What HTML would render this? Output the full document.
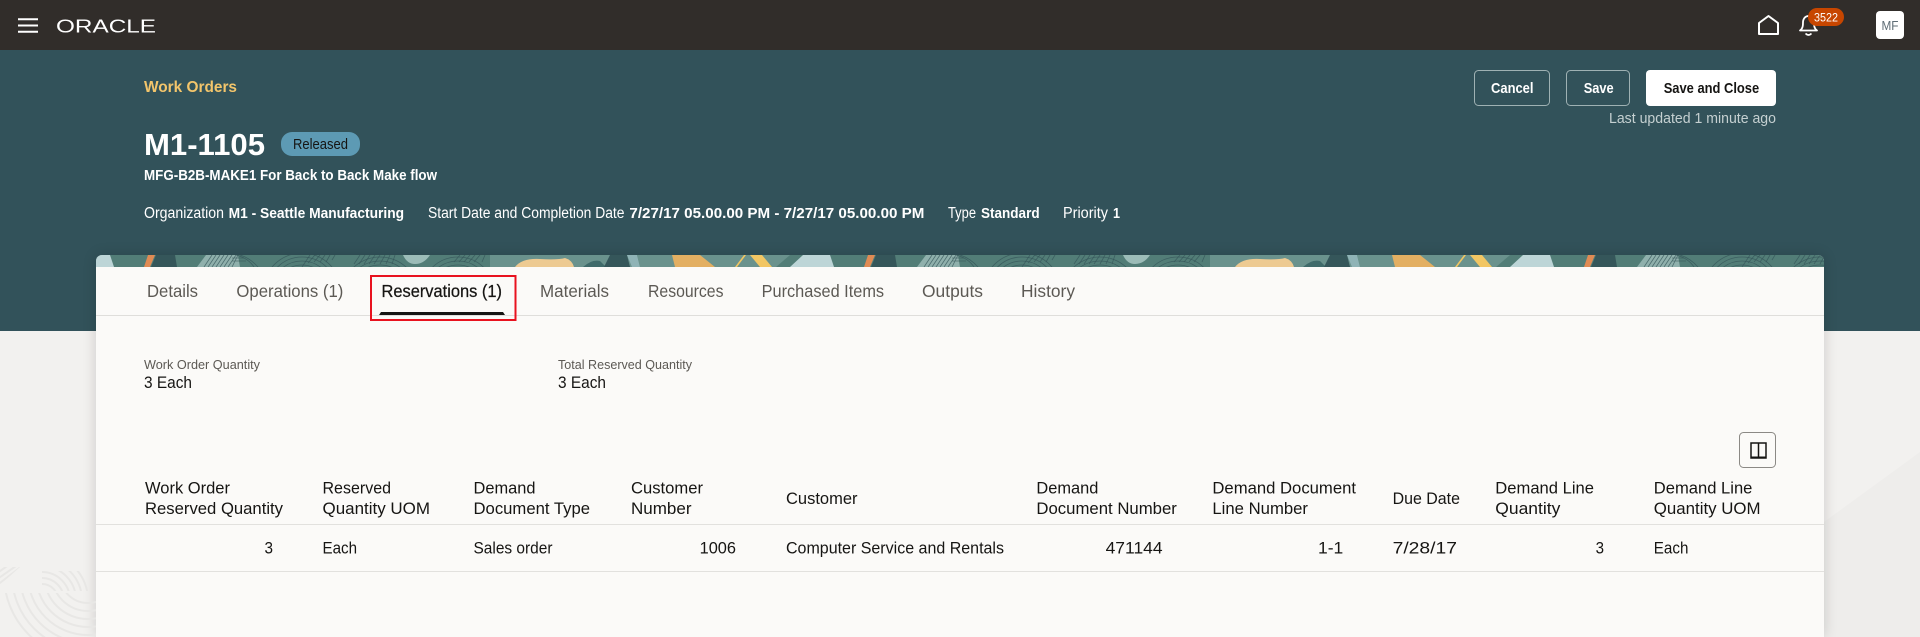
<!DOCTYPE html>
<html lang="en">
<head>
<meta charset="utf-8">
<title>Work Orders - Reservations</title>
<style>
html,body{margin:0;padding:0;width:1920px;height:637px;overflow:hidden;background:#f2f1ef}
body{position:relative}
#teal{position:absolute;left:0;top:0;width:1920px;height:331px;background:#32525a}
#art{position:absolute;left:1824px;top:452px;width:96px;height:185px;background:#eeedeb;clip-path:polygon(0 70px,96px 0,96px 185px,0 185px)}
#clip{position:absolute;left:0;top:0;width:1920px;height:637px;overflow:hidden}
#card{position:absolute;left:96px;top:255px;width:1728px;height:382px;background:#fbfaf8;border-radius:6px 6px 0 0;box-shadow:0 0 14px rgba(0,0,0,.16)}
svg{position:absolute;left:0;top:0;display:block}
text{font-family:"Liberation Sans",sans-serif;white-space:pre}
.t{font-size:16.5px;fill:#161513}
.h{font-size:16.5px;fill:#161513;font-weight:400}
.tab{font-size:17.5px;fill:#5c5954}
.w{fill:#fff;font-size:15.5px}
.b{fill:#fff;font-size:15px;font-weight:700}
</style>
</head>
<body>
<div id="clip">
<div id="teal"></div>
<div id="art"></div>
<div id="card"></div>
<svg width="1920" height="637" viewBox="0 0 1920 637" xmlns="http://www.w3.org/2000/svg">
<defs>
<clipPath id="strip"><path d="M96 267V261a6 6 0 0 1 6-6H1818a6 6 0 0 1 6 6V267Z"/></clipPath>
<clipPath id="bl1"><path d="M0 567H20L0 585Z"/></clipPath>
<clipPath id="bl2"><rect x="42" y="571" width="54" height="20"/></clipPath>
<clipPath id="bl3"><rect x="0" y="593" width="96" height="44"/></clipPath>
<g id="tile">
<rect x="96" y="255" width="720" height="12" fill="#527d77"/>
<rect x="490" y="255" width="150" height="12" fill="#6a928d"/>
<path d="M96 255H110L114 267H96Z" fill="#bdd5d7"/>
<path d="M148 255H155L150 267H144Z" fill="#e08b54"/>
<path d="M156 255H175L177 267H151Z" fill="#35565a"/>
<path d="M197 267L206 255H238L240 267Z" fill="#8fb0ac"/>
<g fill="none" stroke="#35565a" stroke-width=".8" stroke-opacity=".75">
<path d="M204 267L212 255M208 267L216 255M212 267L220 255M216 267L224 255M220 267L228 255M224 267L232 255M228 267L236 255M232 267L238 255M232 258H244M232 261H246"/>
<path d="M236 255Q248 258 254 267M240 255Q250 258 258 267"/>
<circle cx="302" cy="292" r="27"/><circle cx="302" cy="292" r="31"/><circle cx="302" cy="292" r="35"/><circle cx="302" cy="292" r="39"/>
<circle cx="380" cy="296" r="31"/><circle cx="380" cy="296" r="35"/><circle cx="380" cy="296" r="39"/>
<path d="M310 255L302 267M315 255L308 263M320 255L314 262M325 255L320 262M330 255L326 262M335 255L332 260"/>
<path d="M360 255L354 264M365 255L359 264M370 255L364 264M375 255L369 264M380 255L374 264M385 255L380 264M390 255L386 264M395 255L392 264"/>
<circle cx="458" cy="294" r="29"/><circle cx="458" cy="294" r="33"/><circle cx="458" cy="294" r="37"/>
<path d="M460 255L454 262M465 255L459 262M470 255L464 262M475 255L469 262M480 255L474 262M485 255L482 262"/>
</g>
<path d="M403 255H430Q424 264 415 264Q407 264 403 255Z" fill="#9cbcb8"/>
<path d="M515 267Q522 258 540 259Q558 260 565 258Q572 260 574 267Z" fill="#edca92"/>
<path d="M583 267Q592 259 600 261L606 267Z" fill="#3f6a6a"/>
<path d="M610 255H627L630 267H604Z" fill="#35565a"/>
<path d="M627 255H637L640 267H632Z" fill="#8fb3b6"/>
<path d="M637 255H790L776 267H640Z" fill="#6a928d"/>
<path d="M672 255H700L715 267H675Z" fill="#e3af62"/>
<path d="M735 267L744 255H746L737 267Z" fill="#f2c663"/>
<path d="M750 255H762L772 267H760Z" fill="#f2c663"/>
<path d="M790 267L803 255H832L836 267Z" fill="#bdd5d7"/>
</g>
</defs>

<!-- top bar -->
<rect x="0" y="0" width="1920" height="50" fill="#312d2a"/>
<path d="M18 19.2H38M18 25.5H38M18 31.8H38" stroke="#fff" stroke-width="2" fill="none"/>
<text x="56" y="32.5" font-size="18" fill="#fff" textLength="100" lengthAdjust="spacingAndGlyphs">ORACLE</text>
<path d="M1759 34V23L1768.5 16L1778 23V34Z" fill="none" stroke="#fff" stroke-width="2" stroke-linejoin="round"/>
<path d="M1800 30.5C1803 28.5 1803 25 1803 22.5C1803 18.5 1805.5 16 1808.5 16C1811.5 16 1814 18.5 1814 22.5C1814 25 1814 28.5 1817 30.5Z" fill="none" stroke="#fff" stroke-width="1.8" stroke-linejoin="round"/>
<path d="M1805.5 33.5Q1808.5 36.5 1811.5 33.5" fill="none" stroke="#fff" stroke-width="1.6"/>
<rect x="1808" y="8" width="36" height="18" rx="9" fill="#c74600"/>
<text x="1814" y="21.5" font-size="12" fill="#fff" textLength="24" lengthAdjust="spacingAndGlyphs">3522</text>
<rect x="1876" y="11" width="28" height="28" rx="4" fill="#fff"/>
<text x="1881.5" y="30" font-size="13" fill="#5f6d76" textLength="17" lengthAdjust="spacingAndGlyphs">MF</text>

<!-- page header -->
<text class="b" x="144" y="92" style="fill:#f3c56b;font-size:16px" textLength="93" lengthAdjust="spacingAndGlyphs">Work Orders</text>
<text x="144" y="155" font-size="31" font-weight="700" fill="#fff" textLength="121" lengthAdjust="spacingAndGlyphs">M1-1105</text>
<rect x="281" y="132" width="79" height="24" rx="11" fill="#5d9ab4"/>
<text x="293" y="149" font-size="15" fill="#161513" textLength="55" lengthAdjust="spacingAndGlyphs">Released</text>
<text class="b" x="144" y="180" textLength="293" lengthAdjust="spacingAndGlyphs">MFG-B2B-MAKE1 For Back to Back Make flow</text>

<text class="w" x="144" y="218" textLength="80" lengthAdjust="spacingAndGlyphs">Organization</text>
<text class="b" x="228.6" y="218" textLength="175.5" lengthAdjust="spacingAndGlyphs">M1 - Seattle Manufacturing</text>
<text class="w" x="428" y="218" textLength="196.5" lengthAdjust="spacingAndGlyphs">Start Date and Completion Date</text>
<text class="b" x="629.4" y="218" textLength="295" lengthAdjust="spacingAndGlyphs">7/27/17 05.00.00 PM - 7/27/17 05.00.00 PM</text>
<text class="w" x="948" y="218" textLength="28" lengthAdjust="spacingAndGlyphs">Type</text>
<text class="b" x="981" y="218" textLength="58.6" lengthAdjust="spacingAndGlyphs">Standard</text>
<text class="w" x="1063" y="218" textLength="45" lengthAdjust="spacingAndGlyphs">Priority</text>
<text class="b" x="1113" y="218" textLength="7" lengthAdjust="spacingAndGlyphs">1</text>

<!-- buttons -->
<rect x="1474.5" y="70.5" width="75" height="35" rx="4" fill="none" stroke="#9fb1b3"/>
<text class="b" x="1491" y="93" textLength="42.5" lengthAdjust="spacingAndGlyphs">Cancel</text>
<rect x="1566.5" y="70.5" width="63" height="35" rx="4" fill="none" stroke="#9fb1b3"/>
<text class="b" x="1583.7" y="93" textLength="30" lengthAdjust="spacingAndGlyphs">Save</text>
<rect x="1646" y="70" width="130" height="36" rx="4" fill="#fff"/>
<text x="1663.7" y="93" font-size="15" font-weight="700" fill="#161513" textLength="95.5" lengthAdjust="spacingAndGlyphs">Save and Close</text>
<text x="1609" y="123" font-size="15" fill="#c5d0d1" textLength="167" lengthAdjust="spacingAndGlyphs">Last updated 1 minute ago</text>

<!-- banner -->
<g clip-path="url(#strip)">
<use href="#tile"/>
<use href="#tile" x="720"/>
<use href="#tile" x="1440"/>
</g>

<!-- tabs -->
<text class="tab" x="147" y="297" textLength="51" lengthAdjust="spacingAndGlyphs">Details</text>
<text class="tab" x="236.4" y="297" textLength="107" lengthAdjust="spacingAndGlyphs">Operations (1)</text>
<text class="tab" x="381.5" y="297" style="fill:#161513" stroke="#161513" stroke-width=".25" textLength="120.5" lengthAdjust="spacingAndGlyphs">Reservations (1)</text>
<text class="tab" x="540" y="297" textLength="69" lengthAdjust="spacingAndGlyphs">Materials</text>
<text class="tab" x="648" y="297" textLength="75.5" lengthAdjust="spacingAndGlyphs">Resources</text>
<text class="tab" x="761.6" y="297" textLength="122.5" lengthAdjust="spacingAndGlyphs">Purchased Items</text>
<text class="tab" x="922" y="297" textLength="61" lengthAdjust="spacingAndGlyphs">Outputs</text>
<text class="tab" x="1021" y="297" textLength="54" lengthAdjust="spacingAndGlyphs">History</text>
<rect x="96" y="315" width="1728" height="1" fill="#dfdedb"/>
<path d="M379 315L381 312H503L505 315Z" fill="#161513"/>
<rect x="371" y="276" width="144.5" height="44" fill="none" stroke="#e8121f" stroke-width="2"/>

<!-- summary -->
<text x="144" y="369" font-size="13" fill="#5c5954" textLength="116" lengthAdjust="spacingAndGlyphs">Work Order Quantity</text>
<text class="t" x="144" y="388" textLength="48" lengthAdjust="spacingAndGlyphs">3 Each</text>
<text x="558" y="369" font-size="13" fill="#5c5954" textLength="134" lengthAdjust="spacingAndGlyphs">Total Reserved Quantity</text>
<text class="t" x="558" y="388" textLength="48" lengthAdjust="spacingAndGlyphs">3 Each</text>

<!-- columns button -->
<rect x="1739.5" y="432.5" width="36" height="35" rx="4" fill="none" stroke="#8b8985"/>
<rect x="1751" y="443" width="15" height="15" fill="none" stroke="#161513" stroke-width="1.5"/>
<path d="M1758.5 443V458" stroke="#161513" stroke-width="1.5"/>
<path d="M1751 457.5H1766" stroke="#161513" stroke-width="2"/>

<!-- table header -->
<text class="h" x="145" y="493.5" textLength="85" lengthAdjust="spacingAndGlyphs">Work Order</text>
<text class="h" x="145" y="514" textLength="138" lengthAdjust="spacingAndGlyphs">Reserved Quantity</text>
<text class="h" x="322.5" y="493.5" textLength="68.5" lengthAdjust="spacingAndGlyphs">Reserved</text>
<text class="h" x="322.5" y="514" textLength="107.5" lengthAdjust="spacingAndGlyphs">Quantity UOM</text>
<text class="h" x="473.5" y="493.5" textLength="62" lengthAdjust="spacingAndGlyphs">Demand</text>
<text class="h" x="473.5" y="514" textLength="116.5" lengthAdjust="spacingAndGlyphs">Document Type</text>
<text class="h" x="631" y="493.5" textLength="72" lengthAdjust="spacingAndGlyphs">Customer</text>
<text class="h" x="631" y="514" textLength="60.5" lengthAdjust="spacingAndGlyphs">Number</text>
<text class="h" x="786" y="504" textLength="71.5" lengthAdjust="spacingAndGlyphs">Customer</text>
<text class="h" x="1036.4" y="493.5" textLength="62" lengthAdjust="spacingAndGlyphs">Demand</text>
<text class="h" x="1036.4" y="514" textLength="140.5" lengthAdjust="spacingAndGlyphs">Document Number</text>
<text class="h" x="1212.4" y="493.5" textLength="143.6" lengthAdjust="spacingAndGlyphs">Demand Document</text>
<text class="h" x="1212.4" y="514" textLength="95.6" lengthAdjust="spacingAndGlyphs">Line Number</text>
<text class="h" x="1392.6" y="504" textLength="67.4" lengthAdjust="spacingAndGlyphs">Due Date</text>
<text class="h" x="1495.3" y="493.5" textLength="98.7" lengthAdjust="spacingAndGlyphs">Demand Line</text>
<text class="h" x="1495.3" y="514" textLength="65" lengthAdjust="spacingAndGlyphs">Quantity</text>
<text class="h" x="1653.8" y="493.5" textLength="98.6" lengthAdjust="spacingAndGlyphs">Demand Line</text>
<text class="h" x="1653.8" y="514" textLength="106.8" lengthAdjust="spacingAndGlyphs">Quantity UOM</text>
<rect x="96" y="524" width="1728" height="1" fill="#e2e1de"/>

<!-- table row -->
<text class="t" x="264.5" y="553.5" textLength="8.5" lengthAdjust="spacingAndGlyphs">3</text>
<text class="t" x="322.5" y="553.5" textLength="34.5" lengthAdjust="spacingAndGlyphs">Each</text>
<text class="t" x="473.5" y="553.5" textLength="79" lengthAdjust="spacingAndGlyphs">Sales order</text>
<text class="t" x="699.6" y="553.5" textLength="36.4" lengthAdjust="spacingAndGlyphs">1006</text>
<text class="t" x="786" y="553.5" textLength="218" lengthAdjust="spacingAndGlyphs">Computer Service and Rentals</text>
<text class="t" x="1105.6" y="553.5" textLength="57" lengthAdjust="spacingAndGlyphs">471144</text>
<text class="t" x="1318" y="553.5" textLength="25.3" lengthAdjust="spacingAndGlyphs">1-1</text>
<text class="t" x="1392.6" y="553.5" textLength="64.4" lengthAdjust="spacingAndGlyphs">7/28/17</text>
<text class="t" x="1595.6" y="553.5" textLength="8.4" lengthAdjust="spacingAndGlyphs">3</text>
<text class="t" x="1653.8" y="553.5" textLength="34.6" lengthAdjust="spacingAndGlyphs">Each</text>
<rect x="96" y="571" width="1728" height="1" fill="#e2e1de"/>

<!-- background art, lower left -->
<g fill="none" stroke="#e8e7e5" stroke-width="2">
<g clip-path="url(#bl1)"><path d="M-4 574L10 564M-4 580L16 566M-4 586L22 566"/></g>
<g clip-path="url(#bl2)"><circle cx="42" cy="600" r="16"/><circle cx="42" cy="600" r="22"/><circle cx="42" cy="600" r="28"/><circle cx="42" cy="600" r="34"/><circle cx="42" cy="600" r="40"/><circle cx="42" cy="600" r="46"/></g>
<g clip-path="url(#bl3)"><circle cx="88" cy="575" r="28"/><circle cx="88" cy="575" r="36"/><circle cx="88" cy="575" r="44"/><circle cx="88" cy="575" r="52"/><circle cx="88" cy="575" r="60"/><circle cx="88" cy="575" r="68"/><circle cx="88" cy="575" r="76"/><circle cx="88" cy="575" r="84"/></g>
</g>
</svg>
</div>
</body>
</html>
